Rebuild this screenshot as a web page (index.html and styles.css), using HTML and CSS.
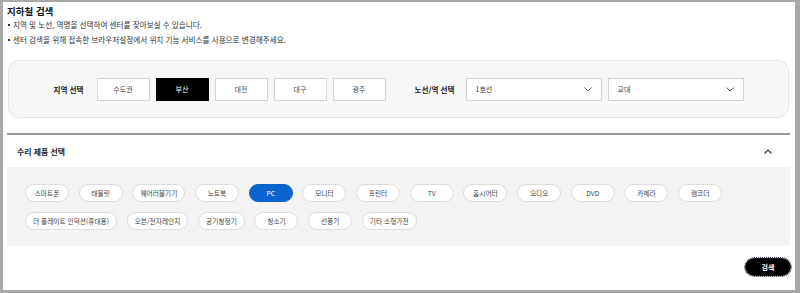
FILE: index.html
```html
<!DOCTYPE html>
<html lang="ko">
<head>
  <meta charset="UTF-8" />
  <meta name="viewport" content="width=device-width, initial-scale=1.0" />
  <title>지하철 검색</title>
  <link rel="stylesheet" href="styles.css">
</head>
<body>
  <div class="frame">
    <h2 class="page-title">지하철 검색</h2>
    <ul class="notice">
      <li>지역 및 노선, 역명을 선택하여 센터를 찾아보실 수 있습니다.</li>
      <li>센터 검색을 위해 접속한 브라우저설정에서 위치 기능 서비스를 사용으로 변경해주세요.</li>
    </ul>

    <div class="region-box">
      <div class="field">
        <span class="field-label">지역 선택</span>
        <div class="region-list">
          <button class="region-btn">수도권</button>
          <button class="region-btn active">부산</button>
          <button class="region-btn">대전</button>
          <button class="region-btn">대구</button>
          <button class="region-btn">광주</button>
        </div>
      </div>
      <div class="field line-field">
        <span class="field-label">노선/역 선택</span>
        <div class="select-box">
          <span>1호선</span>
          <svg width="8" height="5" viewBox="0 0 8 5"><path d="M0.5 0.5 L4 4 L7.5 0.5" fill="none" stroke="#666" stroke-width="1"/></svg>
        </div>
        <div class="select-box">
          <span>교대</span>
          <svg width="8" height="5" viewBox="0 0 8 5"><path d="M0.5 0.5 L4 4 L7.5 0.5" fill="none" stroke="#666" stroke-width="1"/></svg>
        </div>
      </div>
    </div>

    <div class="product-section">
      <div class="product-head">
        <span>수리 제품 선택</span>
        <svg width="8" height="5" viewBox="0 0 8 5"><path d="M0.5 4.5 L4 1 L7.5 4.5" fill="none" stroke="#333" stroke-width="1.2"/></svg>
      </div>
      <div class="product-box">
        <div class="pill-row">
          <span class="pill">스마트폰</span>
          <span class="pill">태블릿</span>
          <span class="pill">웨어러블기기</span>
          <span class="pill">노트북</span>
          <span class="pill active">PC</span>
          <span class="pill">모니터</span>
          <span class="pill">프린터</span>
          <span class="pill">TV</span>
          <span class="pill">홈시어터</span>
          <span class="pill">오디오</span>
          <span class="pill">DVD</span>
          <span class="pill">카메라</span>
          <span class="pill">캠코더</span>
        </div>
        <div class="pill-row">
          <span class="pill">더 플레이트 인덕션(휴대용)</span>
          <span class="pill">오븐/전자레인지</span>
          <span class="pill">공기청정기</span>
          <span class="pill">청소기</span>
          <span class="pill">선풍기</span>
          <span class="pill">기타 소형가전</span>
        </div>
      </div>
    </div>

    <div class="search-row">
      <button class="search-btn">검색</button>
    </div>
  </div>
</body>
</html>
```

FILE: styles.css
```css
body {
  margin: 0;
  background: #a8a8a8;
  font-family: 'Noto Sans CJK KR', 'Noto Sans', sans-serif;
  color: #222;
  overflow: hidden;
}

.frame {
  margin: 2px 5px 3px 3px;
  height: 288px;
  box-sizing: border-box;
  background: #fff;
  padding: 2px 5px 0 4px;
}

.page-title {
  margin: 0;
  font-size: 9.5px;
  line-height: 14px;
  font-weight: 700;
  color: #111;
}

.notice {
  margin: 0;
  padding: 0;
  list-style: none;
}

.notice li {
  font-size: 7.6px;
  line-height: 14.5px;
  color: #333;
  position: relative;
  padding-left: 6px;
}

.notice li::before {
  content: '';
  position: absolute;
  left: 1px;
  top: 6px;
  width: 2px;
  height: 2px;
  background: #333;
}

.region-box {
  margin: 13px 1px 0;
  height: 58px;
  box-sizing: border-box;
  background: #f7f7f7;
  border: 1px solid #e6e6e6;
  border-radius: 11px;
  display: flex;
  justify-content: center;
  align-items: center;
  gap: 29px;
}

.field {
  display: flex;
  align-items: center;
}

.field-label {
  font-size: 7.6px;
  font-weight: 700;
  color: #222;
  margin-right: 13px;
}

.line-field .field-label {
  margin-right: 11px;
}

.region-list {
  display: flex;
  gap: 6px;
}

.region-btn {
  width: 53px;
  height: 23px;
  padding: 0;
  background: #fff;
  border: 1px solid #d4d4d4;
  font-family: inherit;
  font-size: 7px;
  color: #444;
}

.region-btn.active {
  background: #000;
  border-color: #000;
  color: #fff;
}

.select-box {
  width: 136px;
  height: 23px;
  box-sizing: border-box;
  background: #fff;
  border: 1px solid #d4d4d4;
  display: flex;
  align-items: center;
  justify-content: space-between;
  padding: 0 9px;
  font-size: 7px;
  color: #444;
}

.select-box + .select-box {
  margin-left: 6px;
}

.product-section {
  margin-top: 15px;
  border-top: 2px solid #999;
}

.product-head {
  height: 32px;
  display: flex;
  align-items: center;
  justify-content: space-between;
  padding: 0 18px 0 10px;
  font-size: 7.9px;
  font-weight: 700;
  color: #222;
}

.product-box {
  background: #f4f4f4;
  padding: 17px 18px 16px;
  display: flex;
  flex-direction: column;
  gap: 10px;
}

.pill-row {
  display: flex;
  gap: 9.7px;
}

.pill {
  min-width: 44px;
  height: 18px;
  box-sizing: border-box;
  padding: 0 7px;
  background: #fff;
  border: 1px solid #dcdcdc;
  border-radius: 9px;
  display: flex;
  align-items: center;
  justify-content: center;
  font-size: 6.7px;
  color: #444;
}

.pill.active {
  background: #0b63ce;
  border-color: #0b63ce;
  color: #fff;
}

.search-row {
  display: flex;
  justify-content: flex-end;
  margin-top: 12px;
  margin-right: -1px;
}

.search-btn {
  width: 46px;
  height: 18px;
  padding: 0;
  background: #000;
  border: 1px dotted #223;
  border-radius: 9px;
  outline: 1px dotted #334;
  font-family: inherit;
  font-size: 7px;
  font-weight: 700;
  color: #fff;
}
```
